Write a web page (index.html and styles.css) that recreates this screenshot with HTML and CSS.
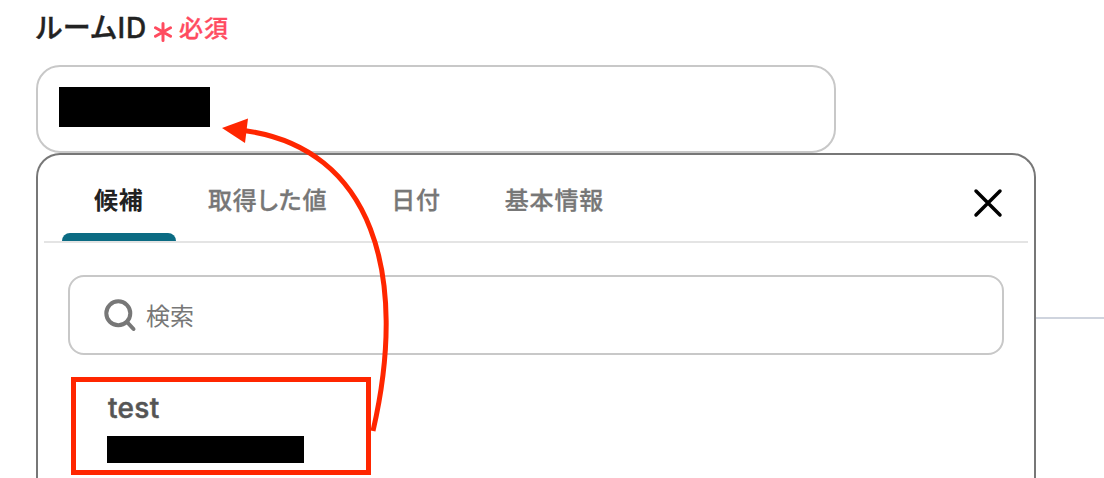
FILE: index.html
```html
<!DOCTYPE html>
<html lang="ja">

<head>
    <meta charset="UTF-8">
    <meta name="viewport" content="width=device-width, initial-scale=1.0">
    <title>ルームID</title>
    <link rel="stylesheet" href="styles.css">
</head>

<body>
    <div class="field">
        <div class="field__label">
            <span class="field__name">ルームID</span>
            <svg class="field__star" width="18" height="20" viewBox="0 0 18 20">
                <path d="M9 1.500v17M1.500 5.800l15 8.400M16.500 5.800l-15 8.400" />
            </svg>
            <span class="field__required">必須</span>
        </div>
        <div class="field__input">
            <div class="field__mask"></div>
        </div>
        <div class="field__row">
            <div class="panel">
                <div class="panel__header">
                    <div class="tabs">
                        <div class="tab tab--active">候補</div>
                        <div class="tab">取得した値</div>
                        <div class="tab">日付</div>
                        <div class="tab">基本情報</div>
                    </div>
                    <svg class="panel__close" width="30" height="30" viewBox="0 0 30 30">
                        <path d="M3 3l24 24M27 3L3 27" />
                    </svg>
                </div>
                <div class="search">
                    <svg class="search__icon" width="34" height="34" viewBox="0 0 34 34">
                        <circle cx="15.300" cy="15.300" r="12" />
                        <path d="M24 24l6.500 7" />
                    </svg>
                    <span class="search__text">検索</span>
                </div>
                <div class="option">
                    <div class="option__name">test</div>
                    <div class="option__mask"></div>
                </div>
            </div>
            <div class="connector"></div>
        </div>
    </div>

    <svg class="arrow" width="1104" height="478" viewBox="0 0 1104 478">
        <path class="arrow__line" d="M373 431C409 275 373 148 244 130.500" />
        <path class="arrow__head" d="M222 128l26-9.500-3 24.500z" />
    </svg>
</body>

</html>
```
FILE: styles.css
```css
* {
    box-sizing: border-box;
}

body {
    margin: 0;
    height: 478px;
    overflow: hidden;
    position: relative;
    background-color: #fff;
    font-family: Inter, "Noto Sans CJK JP", sans-serif;
    color: #222;
}

.field {
    padding-left: 36px;
}

.field__label {
    display: flex;
    align-items: center;
    height: 65px;
    padding-bottom: 9px;
    font-weight: 500;
}

.field__name {
    font-size: 28px;
    line-height: 40px;
    letter-spacing: .8px;
    font-feature-settings: "palt";
    -webkit-text-stroke: .4px #222;
}

.field__star {
    margin: 8px 7px 0 7px;
    fill: none;
    stroke: #ff4b5f;
    stroke-width: 3;
    stroke-linecap: round;
}

.field__required {
    margin-top: -3px;
    font-size: 24px;
    letter-spacing: 1px;
    color: #ff4b5f;
    -webkit-text-stroke: .3px #ff4b5f;
}

.field__input {
    width: 800px;
    height: 88px;
    padding: 20px 21px;
    border: 2px solid #c8c8c8;
    border-radius: 24px;
}

.field__mask {
    width: 151px;
    height: 40px;
    background-color: #000;
}

.field__row {
    display: flex;
}

.panel {
    width: 1000px;
    height: 325px;
    border: 2px solid #777;
    border-bottom: 0;
    border-radius: 24px 24px 0 0;
    background-color: #fff;
}

.panel__header {
    display: flex;
    justify-content: space-between;
    height: 88px;
    margin: 0 6px;
    padding: 0 25px 0 18px;
    border-bottom: 2px solid #e4e4e4;
}

.tabs {
    display: flex;
}

.tab {
    position: relative;
    padding: 29px 32px 0;
    font-size: 24px;
    line-height: 34px;
    font-weight: 500;
    letter-spacing: .8px;
    font-feature-settings: "palt";
    -webkit-text-stroke: .3px #777;
    white-space: nowrap;
    color: #777;
}

.tab--active {
    width: 114px;
    color: #222;
    font-weight: 700;
    -webkit-text-stroke: 0;
}

.tab--active::after {
    content: "";
    position: absolute;
    left: 0;
    right: 0;
    bottom: 0;
    height: 8px;
    border-radius: 8px 8px 0 0;
    background-color: #0b6b83;
}

.panel__close {
    margin-top: 33px;
    fill: none;
    stroke: #000;
    stroke-width: 3.5;
    stroke-linecap: round;
}

.search {
    display: flex;
    align-items: center;
    width: 936px;
    height: 80px;
    margin: 32px 0 0 30px;
    padding-left: 33px;
    border: 2px solid #c8c8c8;
    border-radius: 16px;
}

.search__icon {
    fill: none;
    stroke: #777;
    stroke-width: 4;
    stroke-linecap: round;
}

.search__text {
    margin: -2px 0 0 9px;
    font-size: 24px;
    color: #777;
}

.option {
    width: 300px;
    height: 98px;
    margin: 22px 0 0 33px;
    padding: 9px 0 0 31px;
    border: 5px solid #ff2600;
}

.option__name {
    height: 45px;
    padding-left: 1px;
    font-size: 28px;
    line-height: 35px;
    font-weight: 500;
    letter-spacing: .3px;
    color: #555;
    -webkit-text-stroke: .5px #555;
}

.option__mask {
    width: 197px;
    height: 27px;
    background-color: #000;
}

.connector {
    width: 68px;
    height: 2px;
    margin-top: 164px;
    background-color: #cfd4de;
}

/* arrow from the option up to the input */
.arrow {
    position: absolute;
    top: 0;
    left: 0;
}

.arrow__line {
    fill: none;
    stroke: #ff2600;
    stroke-width: 5;
}

.arrow__head {
    fill: #ff2600;
}
```
